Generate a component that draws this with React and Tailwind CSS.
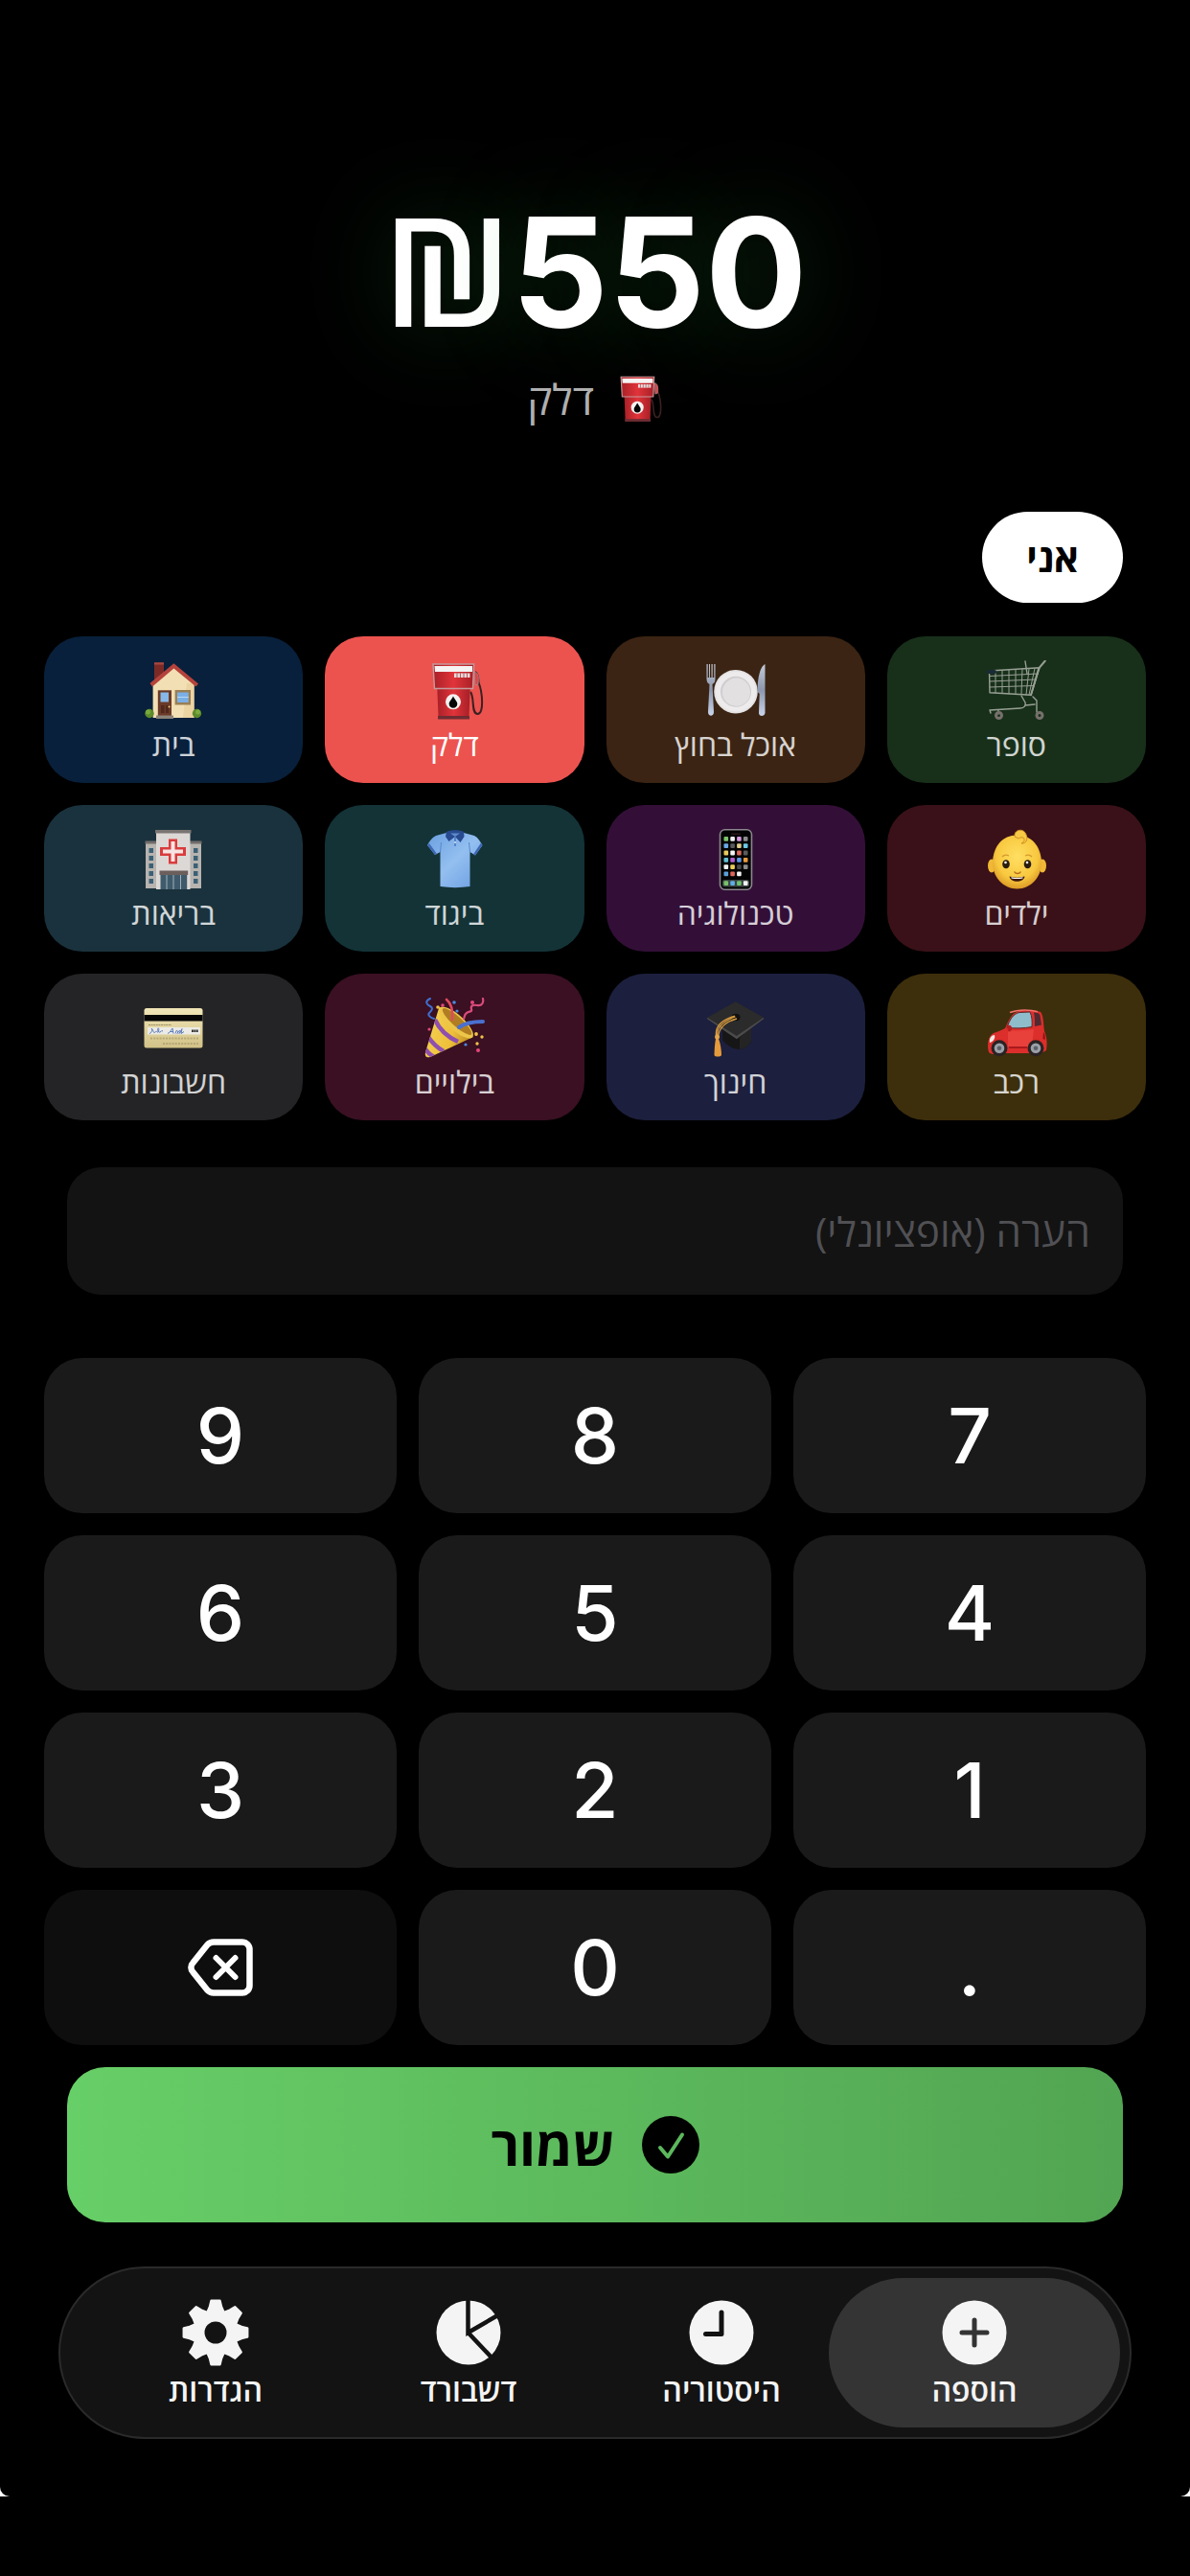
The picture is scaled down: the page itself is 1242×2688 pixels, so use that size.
import { useState } from "react";

function CartIcon() {
  return (
    <g fill="none" stroke="#98a095" strokeWidth="1.4" strokeLinecap="round" strokeLinejoin="round">
      <path d="M3.5 11 56 7.7 47 36.3 4 33.7Z" />
      <path d="M4 16.5 54.5 14M4 22 52.5 20M4 28 50 26.5M10 11v23M17 10.500v24M24 10v25M31 9.500v25M38 9l-1 26M45 9l-3 27M51 8.500 45 36" strokeWidth="1" />
      <path d="M61.800.5 55 8.700 47 36.300" strokeWidth="2" />
      <path d="M41 1 43 14M37 37l4 7c1 3-1 6-5 6L4 52M49 38l4 4v12M41 47l10-1M4 52l1 3M13 52v4" />
      <circle cx="13.500" cy="57.500" r="3" stroke="#77706c" strokeWidth="3" />
      <circle cx="56" cy="57.500" r="3" stroke="#77706c" strokeWidth="3" />
      <path d="M3 12h6" stroke="#1a2a35" strokeWidth="4" />
    </g>
  );
}

function PlateIcon() {
  return (
    <g>
      <defs>
        <linearGradient id="steel" x1="0" y1="0" x2="0" y2="1">
          <stop offset="0" stopColor="#c3c9d6" />
          <stop offset=".5" stopColor="#8c97ad" />
          <stop offset="1" stopColor="#c9d3ea" />
        </linearGradient>
      </defs>
      <path d="M1.500 4v15c0 4 1.500 5 3 6L3 54c0 5 6 5 6 0L7.500 25c1.500-1 3-2 3-6V4H9.300v14H7.700V4H6.500v14H5V4H4v14H2.700V4Z" fill="url(#steel)" />
      <circle cx="32" cy="32.700" r="22.800" fill="#e4e2e3" />
      <circle cx="32" cy="32.700" r="21" fill="#edebec" />
      <circle cx="32" cy="32.700" r="16" fill="#cfcdcf" />
      <circle cx="32.500" cy="33.200" r="14.600" fill="#e2e0e1" />
      <path d="M62.500 4c-6 3-8 18-7.800 29l2 2L56 55c0 4 6 4 6.500 0Z" fill="url(#steel)" />
    </g>
  );
}

function FuelIcon() {
  return (
    <g>
      <defs>
        <linearGradient id="pump" x1="0" y1="0" x2="1" y2="0">
          <stop offset="0" stopColor="#a92027" />
          <stop offset=".5" stopColor="#e0343a" />
          <stop offset="1" stopColor="#a61f26" />
        </linearGradient>
      </defs>
      <path d="M54 12c4 3 3 7 3.500 11 4 10 6 33-1 33-7 0-3-18-7.500-23" fill="none" stroke="#3a2022" strokeWidth="2" />
      <path d="M53 12c4 1 5 4 4 13l-3 1Z" fill="#d8484b" stroke="#a9898b" strokeWidth=".8" />
      <path d="M14.300 29h34.400L47.500 59h-32Z" fill="url(#pump)" />
      <path d="M15 58h33v3.500H15Z" fill="#6e2c32" />
      <path d="M10 4h42.600L51.500 29.500h-40Z" fill="url(#pump)" stroke="#c59a9c" strokeWidth="1.400" />
      <path d="M11.500 6h39.500v6H12Z" fill="#f6f3f3" />
      <path d="M32 13.500h16.500V18H32Z" fill="#ead7d8" />
      <path d="M35 13.500V18M38.500 13.500V18M42 13.500V18M45.500 13.500V18" stroke="#9c2a30" strokeWidth=".7" />
      <circle cx="31" cy="43.300" r="8" fill="#f4f1f1" />
      <path d="M31 37.500c2 4 4.300 5.500 4.300 8a4.300 4.300 0 0 1-8.600 0c0-2.500 2.300-4 4.300-8Z" fill="#050505" />
    </g>
  );
}

function HouseIcon() {
  return (
    <g>
      <path d="M12 2.300h10V22H12Z" fill="#7c2a26" />
      <path d="M12 2.300h10V4.500H12Z" fill="#a94840" />
      <path d="M10.600 22 32.400 5 53.700 22V60H10.600Z" fill="#f2dfb4" />
      <path d="M53.700 24V60H42L46 24Z" fill="#e3c890" opacity=".5" />
      <path d="M7.500 24 32.400 3.300 58 24.500 55.500 27.500 32.400 8.500 10 27.500Z" fill="#b5433c" />
      <path d="M15.800 31.300H30V58H15.800Z" fill="#6a3a28" />
      <path d="M18.500 33.500h8.500v10h-8.500Z" fill="#86b8e8" />
      <path d="M19 47h3.500v8H19ZM24 47h3v8h-3Z" fill="#50281c" />
      <circle cx="27.500" cy="48.500" r="1" fill="#f1d27a" />
      <path d="M33.600 31H50V46.500H33.600Z" fill="#9b7f55" />
      <path d="M36 33.500h11.800V44H36Z" fill="#7ab0e6" />
      <path d="M36 38.500h11.800" stroke="#b9d8f3" strokeWidth="1" />
      <path d="M14 57.500h18V61H14Z" fill="#8c8378" />
      <circle cx="7" cy="55.500" r="4.700" fill="#5c8a2c" />
      <circle cx="5.500" cy="54" r="2.500" fill="#7bab3e" />
      <circle cx="56.500" cy="55.500" r="4.700" fill="#5c8a2c" />
      <circle cx="57.500" cy="54" r="2.500" fill="#7bab3e" />
    </g>
  );
}

function BabyIcon() {
  return (
    <g>
      <defs>
        <radialGradient id="skin" cx=".5" cy=".4" r=".6">
          <stop offset="0" stopColor="#ffdf62" />
          <stop offset=".7" stopColor="#f8c83f" />
          <stop offset="1" stopColor="#dd9b26" />
        </radialGradient>
      </defs>
      <ellipse cx="6" cy="38.500" rx="4" ry="7" fill="#f0b836" />
      <ellipse cx="59" cy="38.500" rx="4" ry="7" fill="#f0b836" />
      <path d="M32.500 6.500C48 6.500 57 18 58 34c.5 16-11 28.500-25.500 28.500S6.500 50 7 34c1-16 10-27.500 25.500-27.500Z" fill="url(#skin)" />
      <path d="M30 8c-1-7 8-9 11-4 4 6 1 12-4 11 3-1 4-4 2-6-2-1-5 1-5 1Z" fill="#f7c944" stroke="#d18f25" strokeWidth="1" />
      <path d="M17 29c2-2 5-2 7-1M41 28c2-1 5-1 7 1" stroke="#d69a2c" strokeWidth="1.300" fill="none" />
      <ellipse cx="21" cy="36.700" rx="3.800" ry="4.500" fill="#2a1c0d" />
      <ellipse cx="43.500" cy="36.700" rx="3.800" ry="4.500" fill="#2a1c0d" />
      <circle cx="20.500" cy="35" r="1.300" fill="#fff" />
      <circle cx="43" cy="35" r="1.300" fill="#fff" />
      <path d="M30 45c1 2 5 2 6 0" stroke="#b66c1c" strokeWidth="1.500" fill="none" strokeLinecap="round" />
      <path d="M24.500 49.500c5 1.500 11 1.500 16 0-1 7-15 7-16 0Z" fill="#3c170c" />
      <path d="M26.500 50.300c4 1 8 1 12 0v1.200c-4 .8-8 .8-12 0Z" fill="#fff" />
    </g>
  );
}

const APP_ROWS = [
  ["#7cc46c", "#f2f2f2", "#d49be0", "#8d8d8d"],
  ["#68a8e8", "#5a5a5a", "#e0cf8a", "#6cc9e6"],
  ["#e8c860", "#f6f6f6", "#d9695a", "#5b5b5b"],
  ["#62bfd4", "#b35fd0", "#5c9ae8", "#e69a40"],
  ["#f1f1f1", "#ecce57", "#484848", "#8b8b8b"],
  ["#5b9fd8", "#de6658", "#f4f4f4"],
];
const DOCK = ["#76c16c", "#60aee8", "#6fc36f", "#f2f2f2"];

function PhoneIcon() {
  return (
    <g>
      <rect x="15.500" y=".8" width="33" height="62.400" rx="5" fill="#030303" stroke="#8b868d" strokeWidth="1.600" />
      <rect x="27" y="4.500" width="10" height="1.500" rx=".7" fill="#2a1a1c" />
      {APP_ROWS.map((row, r) =>
        row.map((color, c) => (
          <rect key={`${r}-${c}`} x={19.500 + c * 6.800} y={8 + r * 7.300} width="4.600" height="4.800" rx="1" fill={color} />
        ))
      )}
      <rect x="18" y="53" width="28" height="7.500" rx="2" fill="#3b4440" />
      {DOCK.map((color, c) => (
        <rect key={c} x={19.500 + c * 6.800} y="54.300" width="4.600" height="4.800" rx="1" fill={color} />
      ))}
    </g>
  );
}

function ShirtIcon() {
  return (
    <g>
      <defs>
        <linearGradient id="cloth" x1="0" y1="0" x2="1" y2="1">
          <stop offset="0" stopColor="#6b9fe0" />
          <stop offset=".5" stopColor="#93bff0" />
          <stop offset="1" stopColor="#6a9ce0" />
        </linearGradient>
      </defs>
      <path d="M24 4 13 7C9 9 6 13 4 17l8 10 5.500-3V60c10 1.500 21 1.500 31 0V24l5.500 3.500L61.500 17C59 13 57 9 53 7L42 4Z" fill="url(#cloth)" />
      <path d="M4 17l8 10 2-1-8-11ZM61.500 17 54 27.500l-2-1 8-12Z" fill="#3e68b4" />
      <path d="M17.500 24 18.500 14M48.500 24 47.500 14" stroke="#5587cf" strokeWidth="1" />
      <path d="M24 3c4-2.500 14-2.500 18 0l.5 5-4 6-5.500-6-6.500 5L23 8Z" fill="#284a8f" />
      <path d="M28 4.500h10L33 8Z" fill="#5e8acb" />
      <path d="M33 8v10" stroke="#4774bb" strokeWidth="1.500" />
      <circle cx="33" cy="14" r=".9" fill="#e6effb" />
    </g>
  );
}

function HospitalIcon() {
  return (
    <g>
      <path d="M3 14h14v48H3ZM47 14h14v48H47Z" fill="#b7b3af" />
      <path d="M2.500 12.500h13v3h-13ZM48.500 12.500h13v3h-13Z" fill="#716c6a" />
      <path d="M6.500 20h4.500v5H6.500ZM6.500 28h4.500v5H6.500ZM6.500 36h4.500v5H6.500ZM6.500 44h4.500v5H6.500ZM6.500 52h4.500v5H6.500ZM53 20h4.500v5H53ZM53 28h4.500v5H53ZM53 36h4.500v5H53ZM53 44h4.500v5H53ZM53 52h4.500v5H53Z" fill="#3b6076" />
      <path d="M14 3h35.500v60H14Z" fill="#dcd8d5" />
      <path d="M13 1h37.500v3.500H13Z" fill="#7a7573" />
      <path d="M27 10.500h9V19h9v9h-9v8.500h-9V28h-9v-9h9Z" fill="#d93c3d" />
      <path d="M29.500 13h4v8.500H42v4h-8.500V34h-4v-8.500H21v-4h8.500Z" fill="#f5e4e2" />
      <path d="M18.500 44.500h27.700V63H18.500Z" fill="#3f5a6b" />
      <path d="M25 47v16M32 47v16M39.500 47v16" stroke="#9fb1bd" strokeWidth="1" />
      <path d="M17.500 43.500h29.700V48H17.500Z" fill="#6b5f5c" />
    </g>
  );
}

function CarIcon() {
  return (
    <g>
      <path d="M3 57C1 50 2 40 8 37c5-2 9-3 12-5 4-8 6-16 15-18 8-2 18-1 22 1 3 3 3 12 4 20 3 6 3 15 2 20-5 4-10 3-14 3H17C11 59 6 60 3 57Z" fill="#dc2e2b" />
      <path d="M25 15.500c9-3.500 22-3 29-.8" stroke="#f1716a" strokeWidth="1.500" fill="none" />
      <path d="M22 31c3-8 6-14 13-15.500l11-.5c2 4 2.500 10 2 15.500-8 1.500-18 2-26 .5Z" fill="#8fbccb" stroke="#5b2a2c" strokeWidth="1" />
      <path d="M50 15.500c4 .3 6 1 6.500 3l1.500 10-7 1.500c0-6 0-10-1-14.500Z" fill="#4f2a31" />
      <path d="M23 34c9 1 20 0 27-1l-2 18H23Z" fill="#e8403b" />
      <path d="M22 29c3-1 5 0 5 3s-2 4-4 3Z" fill="#b51f20" />
      <path d="M4 47c4-1 6-5 5-8-3 0-6 3-5 8Z" fill="#f3e7e3" />
      <path d="M60 36c2 2 2 6 1.500 8l-2-1Z" fill="#8e1215" />
      <path d="M24 52h19" stroke="#a81a1d" strokeWidth="2" />
      <circle cx="14" cy="52.700" r="8.500" fill="#2a2223" />
      <circle cx="14" cy="52.700" r="5.300" fill="#9ba0a8" />
      <circle cx="14" cy="52.700" r="2.300" fill="#5c6068" />
      <circle cx="52" cy="52.700" r="8.500" fill="#2a2223" />
      <circle cx="52" cy="52.700" r="5.300" fill="#9ba0a8" />
      <circle cx="52" cy="52.700" r="2.300" fill="#5c6068" />
    </g>
  );
}

function CapIcon() {
  return (
    <g>
      <path d="M18 28v16c6 8 14 10 18 10 6-1 11-5 12-9V26Z" fill="#161616" />
      <path d="M36 42v12c6-1 11-5 12-9V30Z" fill="#242424" />
      <path d="M2.200 20.700 31.600 4.300 61 20.700 32.800 41.700Z" fill="#2b2b2b" />
      <path d="M2.200 20.700 32.800 40 61 20.700v1.500L32.800 43.200 2.200 22.200Z" fill="#4b4b4b" />
      <ellipse cx="32" cy="20.500" rx="4.500" ry="3.700" fill="#111" />
      <path d="M31.500 20C20 24 12 30 12.500 40M33 22C22 25 14 31 13.500 42M31 19C18 23 10 30 11.500 40" fill="none" stroke="#d79a3d" strokeWidth="1.300" />
      <circle cx="12.500" cy="41" r="2.500" fill="#e0a54a" />
      <path d="M11 43h3c2 5 3 12 3 17-1 2-7 2-7.500 0 0-5 .5-12 1.500-17Z" fill="#e59a3c" />
    </g>
  );
}

function PartyIcon() {
  return (
    <g>
      <defs>
        <linearGradient id="cone" x1="0" y1="0" x2="1" y2=".3">
          <stop offset="0" stopColor="#f6d85a" />
          <stop offset=".6" stopColor="#eebf3a" />
          <stop offset="1" stopColor="#a97819" />
        </linearGradient>
        <clipPath id="coneShape">
          <path d="M16.500 9.500 2 57c-1 5 2 6 5 5L52 41Z" />
        </clipPath>
      </defs>
      <g clipPath="url(#coneShape)">
        <path d="M0 0h64v64H0Z" fill="url(#cone)" />
        <path d="M12 23c4 9 13 18 24 23M5 41c4 6 9 11 16 15M1 52c2 4 5 7 10 10" stroke="#8f4fae" strokeWidth="4.500" fill="none" />
      </g>
      <ellipse cx="34" cy="26" rx="23" ry="8" transform="rotate(42 34 26)" fill="#edc649" />
      <ellipse cx="35" cy="25" rx="20" ry="5" transform="rotate(42 35 25)" fill="#b17d22" />
      <g fill="none" strokeLinecap="round" strokeWidth="2.600">
        <path d="M7 1c-6 3-4 6 0 8s1 5-1 7 1 5 5 6" stroke="#3f6fd0" strokeWidth="2" />
        <path d="M24 2c5 4 7 10 6 21" stroke="#e0495f" />
        <path d="M62 1c1 4-1 8-6 7s-7 1-6 4-2 2-5 4-2 5-3 6" stroke="#d94c7a" strokeWidth="2.200" />
        <path d="M37 31c7-5 15-6 25-6" stroke="#4a70cf" strokeWidth="4" />
      </g>
      <g fill="#e3477a"><circle cx="20" cy="8" r="1.800" /><circle cx="51" cy="5" r="2" /><circle cx="6" cy="33" r="1.600" /><circle cx="57" cy="55" r="2" /></g>
      <g fill="#4b8ae0"><circle cx="32" cy="5" r="1.800" /><circle cx="35" cy="14" r="1.600" /><circle cx="44" cy="49" r="1.600" /></g>
      <g fill="#f2c14a"><circle cx="15" cy="10" r="1.800" /><circle cx="55" cy="38" r="1.900" /><circle cx="61" cy="41" r="1.700" /><circle cx="56" cy="48" r="1.700" /></g>
    </g>
  );
}

function CardIcon() {
  return (
    <g>
      <defs>
        <linearGradient id="gold" x1="0" y1="0" x2="0" y2="1">
          <stop offset="0" stopColor="#f1e6b8" />
          <stop offset="1" stopColor="#d2c288" />
        </linearGradient>
      </defs>
      <rect x="1.500" y="11" width="61" height="41.500" rx="2.500" fill="url(#gold)" />
      <path d="M1.500 18h61v6.500h-61Z" fill="#060606" />
      <path d="M6 28.500h24" stroke="#9c9065" strokeWidth="1.200" strokeDasharray="2 .6" />
      <path d="M5 31h55v7.500H5Z" fill="#eceae4" />
      <path d="M7 37.500c3-1 3-5 2-5.500 3 3 2 6 4 4s2 1 3 0 1-5 0-4 0 5 2 4 1-2 3-1M26 37.500c3-1 4-5 5-5.500l1 5.500m-4-2h4m2 2 1-3c3 0 1 3 1 3l2-3c3 0 0 3 0 3l3-5-1 5 3-2" fill="none" stroke="#5c7cbc" strokeWidth="1" />
      <path d="M51 34.700h7" stroke="#333" strokeWidth="2.400" strokeDasharray="1.900 .5" />
      <path d="M8 42.500h50M21 48h37" stroke="#a99b6b" strokeWidth="2" strokeDasharray="2 1.200" opacity=".7" />
    </g>
  );
}

const CATEGORIES = [
  { id: "super", label: "סופר", Icon: CartIcon, color: "bg-[#18301a]" },
  { id: "food", label: "אוכל בחוץ", Icon: PlateIcon, color: "bg-[#3b2413]" },
  { id: "fuel", label: "דלק", Icon: FuelIcon, color: "bg-[#28100f]" },
  { id: "home", label: "בית", Icon: HouseIcon, color: "bg-[#08203b]" },
  { id: "kids", label: "ילדים", Icon: BabyIcon, color: "bg-[#3a1118]" },
  { id: "tech", label: "טכנולוגיה", Icon: PhoneIcon, color: "bg-[#330f38]" },
  { id: "clothes", label: "ביגוד", Icon: ShirtIcon, color: "bg-[#133337]" },
  { id: "health", label: "בריאות", Icon: HospitalIcon, color: "bg-[#1a323d]" },
  { id: "car", label: "רכב", Icon: CarIcon, color: "bg-[#3d2f0c]" },
  { id: "school", label: "חינוך", Icon: CapIcon, color: "bg-[#1c1f3d]" },
  { id: "fun", label: "בילויים", Icon: PartyIcon, color: "bg-[#3a1022]" },
  { id: "bills", label: "חשבונות", Icon: CardIcon, color: "bg-[#242426]" },
];

const KEYS = ["7", "8", "9", "4", "5", "6", "1", "2", "3", ".", "0"];

function PlusIcon() {
  return (
    <>
      <circle cx="34" cy="34" r="33.500" fill="#f4f4f4" />
      <path d="M34 21v26M21 34h26" stroke="#343434" strokeWidth="5" strokeLinecap="round" />
    </>
  );
}

function ClockIcon() {
  return (
    <>
      <circle cx="34" cy="34" r="33.500" fill="#f4f4f4" />
      <path d="M34 13v22.500H17.500" fill="none" stroke="#131313" strokeWidth="5" strokeLinecap="round" strokeLinejoin="round" />
    </>
  );
}

function PieIcon() {
  return (
    <>
      <circle cx="34" cy="34" r="33.500" fill="#f4f4f4" />
      <path d="M33.500-1V34L68 14M33.500 34 60 62" fill="none" stroke="#131313" strokeWidth="4.500" />
    </>
  );
}

const TEETH = [0, 45, 90, 135, 180, 225, 270, 315];

function GearIcon() {
  return (
    <>
      <g fill="#f4f4f4" stroke="#f4f4f4" strokeWidth="2.500" strokeLinejoin="round">
        {TEETH.map((deg) => (
          <path key={deg} d="M25 14 28 7 29.500.8h9L40 7 43 14Z" transform={`rotate(${deg} 34 34)`} />
        ))}
        <circle cx="34" cy="34" r="22.500" />
      </g>
      <circle cx="34" cy="34" r="11.500" fill="#131313" />
    </>
  );
}

const TABS = [
  { id: "add", label: "הוספה", Icon: PlusIcon },
  { id: "history", label: "היסטוריה", Icon: ClockIcon },
  { id: "dashboard", label: "דשבורד", Icon: PieIcon },
  { id: "settings", label: "הגדרות", Icon: GearIcon },
];

export default function App() {
  const [amount, setAmount] = useState("550");
  const [selected, setSelected] = useState("fuel");
  const [tab, setTab] = useState("add");
  const current = CATEGORIES.find((c) => c.id === selected);
  const CurrentIcon = current.Icon;

  return (
    <div dir="rtl" className="min-h-screen bg-black font-['Open_Sans','Noto_Sans',sans-serif] text-white">
      <div className="bg-white">
        <main className="rounded-b-[10px] bg-black px-[46px] pb-[60px] pt-[180px]">
          <header className="flex flex-col items-center">
            <h1
              dir="ltr"
              className="font-['Inter',sans-serif] text-[158px] font-bold leading-[200px] [text-shadow:0_0_100px_rgba(60,190,80,0.25)]"
            >
              <span className="font-['Open_Sans',sans-serif] font-semibold">₪</span>
              {amount}
            </h1>
            <p className="mt-[6px] flex items-center gap-5 text-[44px] leading-[52px] text-white/70">
              <span className="order-2">{current.label}</span>
              <svg viewBox="0 0 64 64" className="order-1 size-[52px]" aria-hidden="true">
                <CurrentIcon />
              </svg>
            </p>
          </header>

          <div className="mt-[92px] flex px-6">
            <button type="button" className="h-[95px] rounded-full bg-white px-[46px] text-[40px] font-bold leading-[48px] text-black">
              אני
            </button>
          </div>

          <section className="mt-[35px] grid grid-cols-4 gap-[23px]">
            {CATEGORIES.map(({ id, label, Icon, color }) => (
              <button
                key={id}
                type="button"
                aria-pressed={id === selected}
                onClick={() => setSelected(id)}
                className={`flex h-[153px] flex-col items-center justify-center gap-2 rounded-[40px] ${
                  id === selected ? "bg-[#ec534f] text-white" : `${color} text-white/80`
                }`}
              >
                <svg viewBox="0 0 64 64" className="size-16" aria-hidden="true">
                  <Icon />
                </svg>
                <span className="text-[32px] font-medium leading-8">{label}</span>
              </button>
            ))}
          </section>

          <div className="mt-[49px] px-6">
            <input
              type="text"
              aria-label="הערה"
              placeholder="הערה (אופציונלי)"
              className="h-[133px] w-full rounded-[35px] bg-[#131313] px-[34px] text-[42px] text-white outline-none placeholder:text-[#505054]"
            />
          </div>

          <section className="mt-[66px] grid grid-cols-3 gap-[23px] font-['Inter',sans-serif]">
            {KEYS.map((key) => (
              <button
                key={key}
                type="button"
                onClick={() => setAmount((value) => value + key)}
                className="h-[162px] rounded-[40px] bg-[#1a1a1a] text-[80px] font-medium leading-[96px]"
              >
                {key}
              </button>
            ))}
            <button
              type="button"
              aria-label="מחיקה"
              onClick={() => setAmount((value) => value.slice(0, -1))}
              className="flex h-[162px] items-center justify-center rounded-[40px] bg-[#0e0e0e]"
            >
              <svg viewBox="0 0 68 60" className="h-[60px] w-[68px]" fill="none" stroke="#fff" strokeWidth="6.500" strokeLinecap="round" strokeLinejoin="round">
                <path d="M27 3.500H57a7.500 7.500 0 0 1 7.500 7.500V49a7.500 7.500 0 0 1-7.500 7.500H27a9 9 0 0 1-6.500-2.700L5.500 35a7 7 0 0 1 0-10L20.500 6.200A9 9 0 0 1 27 3.500Z" />
                <path d="m29.500 20 20 20m0-20-20 20" strokeWidth="6" />
              </svg>
            </button>
          </section>

          <div className="mt-[23px] px-6">
            <button
              type="button"
              className="flex h-[162px] w-full items-center justify-center gap-7 rounded-[40px] bg-linear-to-r from-[#67cf67] to-[#52a552] text-[56px] font-bold leading-[64px] text-black"
            >
              <svg viewBox="0 0 60 60" className="size-[60px]" aria-hidden="true">
                <circle cx="30" cy="30" r="30" fill="#000" />
                <path d="m19 33 8 9.500L42 19.500" fill="none" stroke="#5cb85c" strokeWidth="4" strokeLinecap="round" strokeLinejoin="round" />
              </svg>
              <span>שמור</span>
            </button>
          </div>

          <nav className="mx-[15px] mt-[46px] grid grid-cols-4 rounded-full border-2 border-[#2a2a2a] bg-[#131313] px-[30px] py-[10px]">
            {TABS.map(({ id, label, Icon }) => (
              <button
                key={id}
                type="button"
                aria-current={id === tab ? "page" : undefined}
                onClick={() => setTab(id)}
                className={`-mx-5 flex h-[156px] flex-col items-center justify-center gap-[10px] rounded-full ${
                  id === tab ? "bg-[#343434]" : ""
                }`}
              >
                <svg viewBox="0 0 68 68" className="size-[68px] overflow-visible" aria-hidden="true">
                  <Icon />
                </svg>
                <span className="text-[32px] font-semibold leading-8 text-[#f4f4f4]">{label}</span>
              </button>
            ))}
          </nav>
        </main>
      </div>
    </div>
  );
}
